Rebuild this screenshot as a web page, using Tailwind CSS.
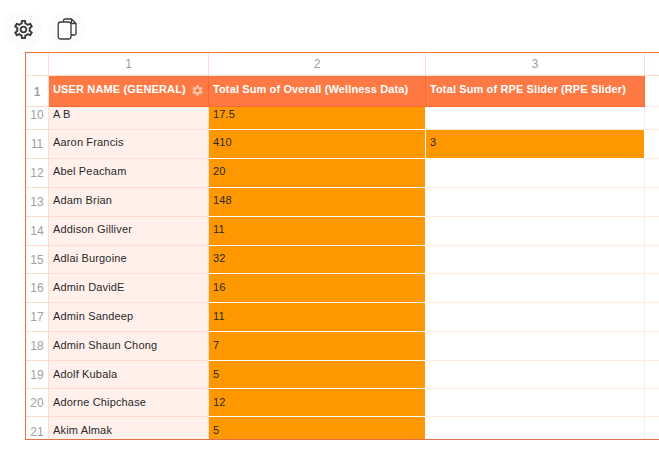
<!DOCTYPE html>
<html><head><meta charset="utf-8"><script src="https://cdn.jsdelivr.net/npm/@tailwindcss/browser@4"></script></head>
<body class="bg-white w-[659px] h-[454px] overflow-hidden font-['Liberation_Sans',Arial,sans-serif]">
<div class="h-[52px] pl-[4px] pt-[10px] flex gap-[6px]">
  <div class="w-[38px] h-[38px] rounded-full bg-[#fcfcfc] flex items-center justify-center">
    <svg class="w-[23px] h-[23px]" viewBox="0 0 24 24" fill="#3a3a3a"><path d="M19.43 12.98c.04-.32.07-.64.07-.98 0-.34-.03-.66-.07-.98l2.11-1.65c.19-.15.24-.42.12-.64l-2-3.46c-.09-.16-.26-.25-.44-.25-.06 0-.12.01-.17.03l-2.49 1c-.52-.4-1.08-.73-1.69-.98l-.38-2.65C14.46 2.18 14.25 2 14 2h-4c-.25 0-.46.18-.49.42l-.38 2.65c-.61.25-1.17.59-1.69.98l-2.49-1c-.06-.02-.12-.03-.18-.03-.17 0-.34.09-.43.25l-2 3.46c-.13.22-.07.49.12.64l2.11 1.65c-.04.32-.07.65-.07.98 0 .33.03.66.07.98l-2.11 1.65c-.19.15-.24.42-.12.64l2 3.46c.09.16.26.25.44.25.06 0 .12-.01.17-.03l2.49-1c.52.4 1.08.73 1.69.98l.38 2.65c.03.24.24.42.49.42h4c.25 0 .46-.18.49-.42l.38-2.65c.61-.25 1.17-.59 1.69-.98l2.49 1c.06.02.12.03.18.03.17 0 .34-.09.43-.25l2-3.46c.12-.22.07-.49-.12-.64l-2.11-1.65zm-1.98-1.71c.04.31.05.52.05.73 0 .21-.02.43-.05.73l-.14 1.13.89.7 1.08.84-.7 1.21-1.27-.51-1.04-.42-.9.68c-.43.32-.84.56-1.25.73l-1.06.43-.16 1.13-.2 1.35h-1.4l-.19-1.35-.16-1.13-1.06-.43c-.43-.18-.83-.41-1.23-.71l-.91-.7-1.06.43-1.27.51-.7-1.21 1.08-.84.89-.7-.14-1.13c-.03-.31-.05-.54-.05-.74s.02-.43.05-.73l.14-1.13-.89-.7-1.08-.84.7-1.21 1.27.51 1.04.42.9-.68c.43-.32.84-.56 1.25-.73l1.06-.43.16-1.13.2-1.35h1.39l.19 1.35.16 1.13 1.06.43c.43.18.83.41 1.23.71l.91.7 1.06-.43 1.27-.51.7 1.21-1.07.85-.89.7.14 1.13zM12 8c-2.21 0-4 1.79-4 4s1.79 4 4 4 4-1.79 4-4-1.79-4-4-4zm0 6c-1.1 0-2-.9-2-2s.9-2 2-2 2 .9 2 2-.9 2-2 2z"/></svg>
  </div>
  <div class="w-[38px] h-[38px] rounded-full bg-[#fcfcfc] flex items-center justify-center">
    <svg class="w-[20px] h-[22px]" viewBox="0 0 20 22" fill="none" stroke="#3a3a3a" stroke-width="1.3" stroke-linejoin="round"><path d="M6.5 4V2.5a1.5 1.5 0 0 1 1.5-1.5h6.5l4.5 4.5v10a1.5 1.5 0 0 1-1.5 1.5H14"/><path d="M14.5 1v4.5H19"/><rect x="1.2" y="4" width="12.8" height="17" rx="2.5"/></svg>
  </div>
</div>
<div class="ml-[25px] w-[634px] h-[388px] border-y border-l border-[#f0703c] border-b-[#e0734a] overflow-hidden grid grid-cols-[23px_160px_217px_219px_15px] grid-rows-[23px_31px_23px_29px_29px_29px_29px_28px_29px_29px_29px_28px_28px_22px] text-[11px] tracking-[0.16px] text-[#2a2a2a]">
  <!-- column numbers -->
  <div class="border-r border-b border-[#ffdccf]"></div>
  <div class="border-r border-b border-[#ffdccf] flex items-center justify-center text-[12px] tracking-normal text-[#a0a0a0]">1</div>
  <div class="border-r border-b border-[#ffdccf] flex items-center justify-center text-[12px] tracking-normal text-[#a0a0a0]">2</div>
  <div class="border-r border-b border-[#ffdccf] flex items-center justify-center text-[12px] tracking-normal text-[#a0a0a0]">3</div>
  <div class="border-b border-[#ffdccf]"></div>
  <!-- header -->
  <div class="border-r border-b border-[#ffdccf] flex items-center justify-center pt-[2px] text-[12px] tracking-normal text-[#a0a0a0] font-bold">1</div>
  <div class="bg-[#ff7945] border-r border-b border-[#fa6a33] flex items-center pl-[4px] pb-[3px] text-white font-bold tracking-[0.14px] gap-[5px]"><span>USER NAME (GENERAL)</span><svg class="w-[13px] h-[13px] mt-[1px]" viewBox="0 0 24 24" fill="#ffc4ab"><path d="M19.14 12.94c.04-.3.06-.61.06-.94 0-.32-.02-.64-.07-.94l2.03-1.58a.49.49 0 0 0 .12-.61l-1.92-3.32a.49.49 0 0 0-.59-.22l-2.39.96c-.5-.38-1.03-.7-1.62-.94l-.36-2.54a.48.48 0 0 0-.48-.41h-3.84c-.24 0-.43.17-.47.41l-.36 2.54c-.59.24-1.13.57-1.62.94l-2.39-.96a.49.49 0 0 0-.59.22L2.74 8.87c-.12.21-.08.47.12.61l2.03 1.58c-.05.3-.09.63-.09.94s.02.64.07.94l-2.03 1.58a.49.49 0 0 0-.12.61l1.92 3.32c.12.22.37.29.59.22l2.39-.96c.5.38 1.03.7 1.62.94l.36 2.54c.05.24.24.41.48.41h3.84c.24 0 .44-.17.47-.41l.36-2.54c.59-.24 1.13-.56 1.62-.94l2.39.96c.22.08.47 0 .59-.22l1.92-3.32c.12-.22.07-.47-.12-.61l-2.01-1.58zM12 15.6A3.6 3.6 0 1 1 12 8.4a3.6 3.6 0 0 1 0 7.2z"/></svg></div>
  <div class="bg-[#ff7945] border-r border-b border-[#fa6a33] flex items-center pl-[4px] pb-[3px] text-white font-bold tracking-[0.12px]">Total Sum of Overall (Wellness Data)</div>
  <div class="bg-[#ff7945] border-r border-b border-[#fa6a33] flex items-center pl-[4px] pb-[3px] text-white font-bold tracking-[0.12px]">Total Sum of RPE Slider (RPE Slider)</div>
  <div class="border-b border-[#ffe9e1]"></div>
  <!-- 10 -->
  <div class="border-r border-b border-[#ffdccf] flex items-end justify-center pb-[5px] text-[12px] tracking-normal text-[#a0a0a0]">10</div>
  <div class="bg-[#fff0eb] border-r border-b border-[#ffdccf] flex items-end pl-[4px] pb-[7px]">A B</div>
  <div class="bg-[#ff9800] border-r border-b border-white flex items-end pl-[4px] pb-[7px]">17.5</div>
  <div class="border-r border-b border-[#ffe9e1]"></div>
  <div class="border-b border-[#ffe9e1]"></div>
  <!-- 11 -->
  <div class="border-r border-b border-[#ffdccf] flex items-center justify-center text-[12px] tracking-normal text-[#a0a0a0]">11</div>
  <div class="bg-[#fff0eb] border-r border-b border-[#ffdccf] flex items-center pl-[4px] pb-[3px]">Aaron Francis</div>
  <div class="bg-[#ff9800] border-r border-b border-white flex items-center pl-[4px] pb-[3px]">410</div>
  <div class="bg-[#ff9800] border-r border-b border-white flex items-center pl-[4px] pb-[3px]">3</div>
  <div class="border-b border-[#ffe9e1]"></div>
  <!-- 12 -->
  <div class="border-r border-b border-[#ffdccf] flex items-center justify-center text-[12px] tracking-normal text-[#a0a0a0]">12</div>
  <div class="bg-[#fff0eb] border-r border-b border-[#ffdccf] flex items-center pl-[4px] pb-[3px]">Abel Peacham</div>
  <div class="bg-[#ff9800] border-r border-b border-white flex items-center pl-[4px] pb-[3px]">20</div>
  <div class="border-r border-b border-[#ffe9e1]"></div>
  <div class="border-b border-[#ffe9e1]"></div>
  <!-- 13 -->
  <div class="border-r border-b border-[#ffdccf] flex items-center justify-center text-[12px] tracking-normal text-[#a0a0a0]">13</div>
  <div class="bg-[#fff0eb] border-r border-b border-[#ffdccf] flex items-center pl-[4px] pb-[3px]">Adam Brian</div>
  <div class="bg-[#ff9800] border-r border-b border-white flex items-center pl-[4px] pb-[3px]">148</div>
  <div class="border-r border-b border-[#ffe9e1]"></div>
  <div class="border-b border-[#ffe9e1]"></div>
  <!-- 14 -->
  <div class="border-r border-b border-[#ffdccf] flex items-center justify-center text-[12px] tracking-normal text-[#a0a0a0]">14</div>
  <div class="bg-[#fff0eb] border-r border-b border-[#ffdccf] flex items-center pl-[4px] pb-[3px]">Addison Gilliver</div>
  <div class="bg-[#ff9800] border-r border-b border-white flex items-center pl-[4px] pb-[3px]">11</div>
  <div class="border-r border-b border-[#ffe9e1]"></div>
  <div class="border-b border-[#ffe9e1]"></div>
  <!-- 15 -->
  <div class="border-r border-b border-[#ffdccf] flex items-center justify-center text-[12px] tracking-normal text-[#a0a0a0]">15</div>
  <div class="bg-[#fff0eb] border-r border-b border-[#ffdccf] flex items-center pl-[4px] pb-[2px]">Adlai Burgoine</div>
  <div class="bg-[#ff9800] border-r border-b border-white flex items-center pl-[4px] pb-[2px]">32</div>
  <div class="border-r border-b border-[#ffe9e1]"></div>
  <div class="border-b border-[#ffe9e1]"></div>
  <!-- 16 -->
  <div class="border-r border-b border-[#ffdccf] flex items-center justify-center text-[12px] tracking-normal text-[#a0a0a0]">16</div>
  <div class="bg-[#fff0eb] border-r border-b border-[#ffdccf] flex items-center pl-[4px] pb-[2px]">Admin DavidE</div>
  <div class="bg-[#ff9800] border-r border-b border-white flex items-center pl-[4px] pb-[2px]">16</div>
  <div class="border-r border-b border-[#ffe9e1]"></div>
  <div class="border-b border-[#ffe9e1]"></div>
  <!-- 17 -->
  <div class="border-r border-b border-[#ffdccf] flex items-center justify-center text-[12px] tracking-normal text-[#a0a0a0]">17</div>
  <div class="bg-[#fff0eb] border-r border-b border-[#ffdccf] flex items-center pl-[4px] pb-[2px]">Admin Sandeep</div>
  <div class="bg-[#ff9800] border-r border-b border-white flex items-center pl-[4px] pb-[2px]">11</div>
  <div class="border-r border-b border-[#ffe9e1]"></div>
  <div class="border-b border-[#ffe9e1]"></div>
  <!-- 18 -->
  <div class="border-r border-b border-[#ffdccf] flex items-center justify-center text-[12px] tracking-normal text-[#a0a0a0]">18</div>
  <div class="bg-[#fff0eb] border-r border-b border-[#ffdccf] flex items-center pl-[4px] pb-[2px]">Admin Shaun Chong</div>
  <div class="bg-[#ff9800] border-r border-b border-white flex items-center pl-[4px] pb-[2px]">7</div>
  <div class="border-r border-b border-[#ffe9e1]"></div>
  <div class="border-b border-[#ffe9e1]"></div>
  <!-- 19 -->
  <div class="border-r border-b border-[#ffdccf] flex items-center justify-center text-[12px] tracking-normal text-[#a0a0a0]">19</div>
  <div class="bg-[#fff0eb] border-r border-b border-[#ffdccf] flex items-center pl-[4px]">Adolf Kubala</div>
  <div class="bg-[#ff9800] border-r border-b border-white flex items-center pl-[4px]">5</div>
  <div class="border-r border-b border-[#ffe9e1]"></div>
  <div class="border-b border-[#ffe9e1]"></div>
  <!-- 20 -->
  <div class="border-r border-b border-[#ffdccf] flex items-center justify-center text-[12px] tracking-normal text-[#a0a0a0]">20</div>
  <div class="bg-[#fff0eb] border-r border-b border-[#ffdccf] flex items-center pl-[4px]">Adorne Chipchase</div>
  <div class="bg-[#ff9800] border-r border-b border-white flex items-center pl-[4px]">12</div>
  <div class="border-r border-b border-[#ffe9e1]"></div>
  <div class="border-b border-[#ffe9e1]"></div>
  <!-- 21 -->
  <div class="border-r border-[#ffdccf] flex items-start justify-center pt-[6px] text-[12px] tracking-normal text-[#a0a0a0]">21</div>
  <div class="bg-[#fff0eb] border-r border-[#ffdccf] flex items-start pl-[4px] pt-[5px]">Akim Almak</div>
  <div class="bg-[#ff9800] border-r border-white flex items-start pl-[4px] pt-[5px]">5</div>
  <div class="border-r border-[#ffe9e1]"></div>
  <div></div>
</div>
</body></html>
